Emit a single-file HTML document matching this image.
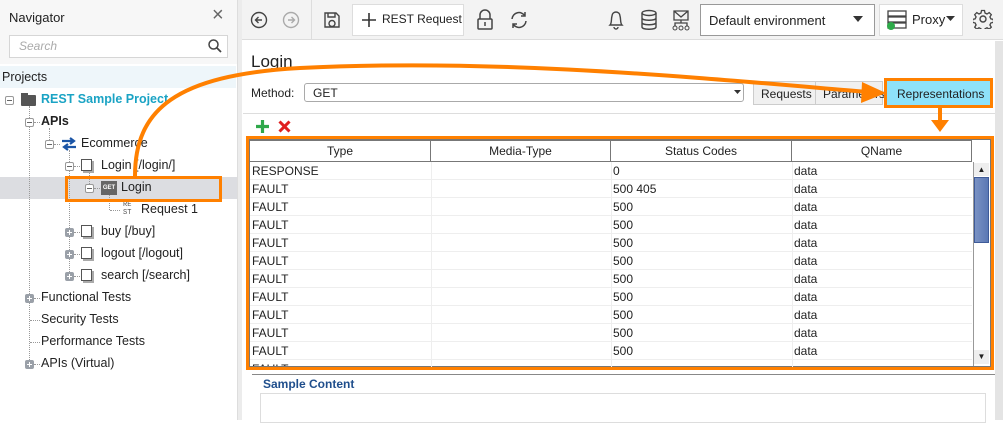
<!DOCTYPE html>
<html><head><meta charset="utf-8"><style>
*{margin:0;padding:0;box-sizing:border-box}
body{width:1003px;height:420px;overflow:hidden;background:#fff;font-family:"Liberation Sans",sans-serif;font-size:13px;color:#222;position:relative}
.a{position:absolute;white-space:nowrap}
.t{font-size:12.5px;color:#222}
.row{position:absolute;left:250px;width:722px;height:18px;border-bottom:1px solid #eee;font-size:12px;line-height:18px}
.row span{position:absolute;top:0}
.ex{position:absolute;width:9px;height:9px;border:1px solid #999;border-radius:2px;background:#fff}
.ex:after{content:"";position:absolute;left:1px;top:3px;width:5px;height:1px;background:#666}
.pl{background:#9aa0a8;border-color:#9aa0a8}
.pl:after{background:#fff}
.pl:before{content:"";position:absolute;left:3px;top:1px;width:1px;height:5px;background:#fff}
.doc{position:absolute;width:11px;height:12px;border:1.5px solid #555;background:#fff;box-shadow:2px 2px 0 #aaa}
.dot{position:absolute;border-left:1px dotted #999}
.doth{position:absolute;border-top:1px dotted #999;height:0}
</style></head><body>
<div class="a" style="left:0;top:0;width:238px;height:420px;background:#fff"></div>
<div class="a" style="left:0;top:0;width:238px;height:64px;background:#f7f7f7"></div>
<div class="a" style="left:9px;top:10px;font-size:13px">Navigator</div>
<div class="a" style="left:212px;top:4px;font-size:20px;color:#666">×</div>
<div class="a" style="left:9px;top:35px;width:219px;height:23px;border:1px solid #d6d6d6;background:#fff"></div>
<div class="a" style="left:19px;top:39px;font-style:italic;color:#aaa;font-size:12px">Search</div>
<svg class="a" style="left:208px;top:39px" width="14" height="14"><circle cx="5.5" cy="5.5" r="4.5" fill="none" stroke="#444" stroke-width="1.5"/><path d="M9 9L13 13" stroke="#444" stroke-width="1.8"/></svg>
<div class="a" style="left:0;top:66px;width:236px;height:22px;background:#eef6fa"></div>
<div class="a t" style="left:2px;top:70px">Projects</div>
<div class="a" style="left:0;top:177px;width:237px;height:22px;background:#dcdde1"></div>
<div class="dot" style="left:29px;top:106px;height:260px"></div>
<div class="dot" style="left:49px;top:128px;height:20px"></div>
<div class="dot" style="left:69px;top:150px;height:128px"></div>
<div class="dot" style="left:89px;top:172px;height:20px"></div>
<div class="dot" style="left:109px;top:194px;height:16px"></div>
<div class="ex" style="left:5px;top:96px"></div>
<div class="a" style="left:21px;top:95px;width:15px;height:11px;background:#555;border-radius:1px"></div>
<div class="a" style="left:21px;top:93px;width:7px;height:4px;background:#555"></div>
<div class="a" style="left:41px;top:92px;font-size:12.5px;font-weight:bold;color:#1aa3c4">REST Sample Project</div>
<div class="ex" style="left:25px;top:118px"></div><div class="doth" style="left:34px;top:122px;width:6px"></div>
<div class="a" style="left:41px;top:114px;font-weight:bold;font-size:12.5px">APIs</div>
<div class="ex" style="left:45px;top:140px"></div><div class="doth" style="left:54px;top:144px;width:6px"></div>
<svg class="a" style="left:61px;top:137px" width="16" height="14"><path d="M1 4H13M9 1L13 4L9 7M15 10H3M7 7L3 10L7 13" stroke="#1b55a6" stroke-width="2.2" fill="none"/></svg>
<div class="a t" style="left:81px;top:136px">Ecommerce</div>
<div class="ex" style="left:65px;top:162px"></div><div class="doth" style="left:74px;top:166px;width:6px"></div>
<div class="doc" style="left:81px;top:159px"></div>
<div class="a t" style="left:101px;top:158px">Login [/login/]</div>
<div class="ex" style="left:85px;top:184px"></div><div class="doth" style="left:94px;top:188px;width:6px"></div>
<div class="a" style="left:101px;top:181px;width:16px;height:14px;background:#666;color:#fff;font-size:6px;font-weight:bold;line-height:14px;text-align:center">GET</div>
<div class="a t" style="left:121px;top:180px">Login</div>
<div class="doth" style="left:110px;top:210px;width:10px"></div>
<div class="a" style="left:123px;top:201px;font-size:7px;line-height:8px;color:#555;font-family:'Liberation Mono',monospace">RE<br>ST</div>
<div class="a t" style="left:141px;top:202px">Request 1</div>
<div class="ex pl" style="left:65px;top:228px"></div><div class="doth" style="left:74px;top:232px;width:6px"></div><div class="doc" style="left:81px;top:225px"></div>
<div class="a t" style="left:101px;top:224px">buy [/buy]</div>
<div class="ex pl" style="left:65px;top:250px"></div><div class="doth" style="left:74px;top:254px;width:6px"></div><div class="doc" style="left:81px;top:247px"></div>
<div class="a t" style="left:101px;top:246px">logout [/logout]</div>
<div class="ex pl" style="left:65px;top:272px"></div><div class="doth" style="left:74px;top:276px;width:6px"></div><div class="doc" style="left:81px;top:269px"></div>
<div class="a t" style="left:101px;top:268px">search [/search]</div>
<div class="ex pl" style="left:25px;top:294px"></div><div class="doth" style="left:34px;top:298px;width:6px"></div>
<div class="a t" style="left:41px;top:290px">Functional Tests</div>
<div class="doth" style="left:30px;top:320px;width:10px"></div>
<div class="a t" style="left:41px;top:312px">Security Tests</div>
<div class="doth" style="left:30px;top:342px;width:10px"></div>
<div class="a t" style="left:41px;top:334px">Performance Tests</div>
<div class="ex pl" style="left:25px;top:360px"></div><div class="doth" style="left:34px;top:364px;width:6px"></div>
<div class="a t" style="left:41px;top:356px">APIs (Virtual)</div>
<div class="a" style="left:237px;top:0;width:5px;height:420px;background:#ececec;border-left:1px solid #ddd"></div>
<div class="a" style="left:242px;top:0;width:761px;height:40px;background:#f3f3f3;border-bottom:1px solid #ddd"></div>
<div class="a" style="left:311px;top:0;width:1px;height:40px;background:#ddd"></div>
<svg class="a" style="left:250px;top:11px" width="18" height="18"><circle cx="9" cy="9" r="7.5" fill="none" stroke="#444" stroke-width="1.4"/><path d="M12 9H6M8.5 6L5.5 9L8.5 12" fill="none" stroke="#444" stroke-width="1.4"/></svg>
<svg class="a" style="left:282px;top:11px" width="18" height="18"><circle cx="9" cy="9" r="7.5" fill="none" stroke="#aaa" stroke-width="1.4"/><path d="M6 9H12M9.5 6L12.5 9L9.5 12" fill="none" stroke="#aaa" stroke-width="1.4"/></svg>
<svg class="a" style="left:323px;top:11px" width="18" height="18"><path d="M2 2H13L16 5V16H2Z M5 2V6H12V2 M6 12.5a3 3 0 1 0 6 0a3 3 0 1 0 -6 0" fill="none" stroke="#444" stroke-width="1.4"/></svg>
<div class="a" style="left:352px;top:4px;width:112px;height:32px;border:1px solid #ddd;background:#fff"></div>
<svg class="a" style="left:361px;top:12px" width="16" height="16"><path d="M8 1V15M1 8H15" stroke="#333" stroke-width="1.6"/></svg>
<div class="a" style="left:382px;top:12px;font-size:12px">REST Request</div>
<svg class="a" style="left:476px;top:9px" width="18" height="22"><path d="M4 10V6a5 5 0 0 1 10 0V10" fill="none" stroke="#444" stroke-width="1.5"/><rect x="2" y="10" width="14" height="10" rx="1" fill="none" stroke="#444" stroke-width="1.5"/><path d="M9 13V17" stroke="#444" stroke-width="1.5"/></svg>
<svg class="a" style="left:509px;top:10px" width="20" height="20"><path d="M3 9a7 7 0 0 1 13-3M17 11a7 7 0 0 1-13 3M16 2V6H12M4 18V14H8" fill="none" stroke="#444" stroke-width="1.5"/></svg>
<svg class="a" style="left:607px;top:9px" width="18" height="22"><path d="M3 16C5 14 4 10 5 7a4 4 0 0 1 8 0c1 3 0 7 2 9Z M7 18a2 2 0 0 0 4 0" fill="none" stroke="#444" stroke-width="1.4"/></svg>
<svg class="a" style="left:640px;top:9px" width="18" height="22"><ellipse cx="9" cy="4" rx="7" ry="2.5" fill="none" stroke="#444" stroke-width="1.4"/><path d="M2 4V18c0 3 14 3 14 0V4M2 9c0 3 14 3 14 0M2 13.5c0 3 14 3 14 0" fill="none" stroke="#444" stroke-width="1.4"/></svg>
<svg class="a" style="left:670px;top:9px" width="22" height="22"><path d="M4 2H18V11H4Z M4 2L11 8L18 2 M11 11V14 M5 17V14H17V17" fill="none" stroke="#444" stroke-width="1.3"/><circle cx="5" cy="19" r="2" fill="none" stroke="#444"/><circle cx="11" cy="19" r="2" fill="none" stroke="#444"/><circle cx="17" cy="19" r="2" fill="none" stroke="#444"/></svg>
<div class="a" style="left:700px;top:4px;width:175px;height:32px;border:1px solid #999;background:#fff"></div>
<div class="a" style="left:709px;top:13px;font-size:13px">Default environment</div>
<svg class="a" style="left:853px;top:16px" width="10" height="6"><path d="M0 0H10L5 6Z" fill="#333"/></svg>
<div class="a" style="left:879px;top:4px;width:84px;height:32px;border:1px solid #ddd;background:#fff"></div>
<svg class="a" style="left:885px;top:9px" width="24" height="22"><rect x="3" y="2" width="18" height="5" fill="none" stroke="#444" stroke-width="1.3"/><rect x="3" y="8" width="18" height="5" fill="none" stroke="#444" stroke-width="1.3"/><rect x="3" y="14" width="18" height="5" fill="none" stroke="#444" stroke-width="1.3"/><circle cx="6" cy="17" r="4" fill="#2eaa4a"/></svg>
<div class="a" style="left:912px;top:12px;font-size:13px">Proxy</div>
<svg class="a" style="left:946px;top:16px" width="9" height="6"><path d="M0 0H9L4.5 5Z" fill="#333"/></svg>
<svg class="a" style="left:973px;top:9px" width="20" height="20"><circle cx="10" cy="10" r="3" fill="none" stroke="#444" stroke-width="1.4"/><path d="M8.5 1.5h3l.5 2.5 2 1 2.2-1.4 2.1 2.1-1.4 2.2 1 2 2.5.5v3l-2.5.5-1 2 1.4 2.2-2.1 2.1-2.2-1.4-2 1-.5 2.5h-3l-.5-2.5-2-1-2.2 1.4-2.1-2.1 1.4-2.2-1-2-2.5-.5v-3l2.5-.5 1-2-1.4-2.2 2.1-2.1 2.2 1.4 2-1Z" fill="none" stroke="#444" stroke-width="1.3"/></svg>
<div class="a" style="left:995px;top:41px;width:8px;height:379px;background:#e4e4e4"></div>
<div class="a" style="left:251px;top:52px;font-size:17px">Login</div>
<div class="a" style="left:251px;top:86px;font-size:12px">Method:</div>
<div class="a" style="left:304px;top:83px;width:440px;height:19px;border:1px solid #aaa;border-radius:3px;background:#fff"></div>
<div class="a" style="left:313px;top:86px;font-size:12px">GET</div>
<svg class="a" style="left:734px;top:90px" width="7" height="4"><path d="M0 0H7L3.5 4Z" fill="#333"/></svg>
<div class="a" style="left:753px;top:81px;width:63px;height:24px;border:1px solid #ccc;background:#f0f0f0"></div>
<div class="a" style="left:761px;top:87px;font-size:12px">Requests</div>
<div class="a" style="left:815px;top:81px;width:68px;height:24px;border:1px solid #ccc;background:#f0f0f0"></div>
<div class="a" style="left:823px;top:87px;font-size:12px">Parameters</div>
<div class="a" style="left:884px;top:78px;width:109px;height:30px;border:3px solid #ff8000;background:#8ee2fa"></div>
<div class="a" style="left:897px;top:87px;font-size:12px">Representations</div>
<div class="a" style="left:243px;top:113px;width:752px;height:1px;background:#ddd"></div>
<svg class="a" style="left:255px;top:119px" width="15" height="15"><path d="M7.5 1V14M1 7.5H14" stroke="#2ea84a" stroke-width="3.2"/></svg>
<svg class="a" style="left:278px;top:120px" width="13" height="13"><path d="M1.5 1.5L11.5 11.5M11.5 1.5L1.5 11.5" stroke="#e02020" stroke-width="3"/></svg>
<div class="a" style="left:246px;top:136px;width:748px;height:234px;border:3px solid #ff8000"></div>
<div class="a" style="left:249px;top:139px;width:742px;height:228px;border:1px solid #777;background:#fff;overflow:hidden"></div>
<div class="a" style="left:250px;top:141px;width:722px;height:21px;border-bottom:1px solid #777;font-size:12px;line-height:20px">
<span class="a" style="left:0;width:181px;text-align:center;border-right:1px solid #777;height:20px">Type</span>
<span class="a" style="left:181px;width:180px;text-align:center;border-right:1px solid #777;height:20px">Media-Type</span>
<span class="a" style="left:361px;width:181px;text-align:center;border-right:1px solid #777;height:20px">Status Codes</span>
<span class="a" style="left:542px;width:180px;text-align:center;border-right:1px solid #777;height:20px">QName</span>
</div>
<div class="a" style="left:250px;top:140px;width:722px;height:1px;background:#777"></div>
<div class="a" style="left:431px;top:162px;width:1px;height:205px;background:#eee"></div>
<div class="a" style="left:611px;top:162px;width:1px;height:205px;background:#eee"></div>
<div class="a" style="left:792px;top:162px;width:1px;height:205px;background:#eee"></div>
<div class="row" style="top:162px"><span style="left:2px">RESPONSE</span><span style="left:363px">0</span><span style="left:544px">data</span></div>
<div class="row" style="top:180px"><span style="left:2px">FAULT</span><span style="left:363px">500 405</span><span style="left:544px">data</span></div>
<div class="row" style="top:198px"><span style="left:2px">FAULT</span><span style="left:363px">500</span><span style="left:544px">data</span></div>
<div class="row" style="top:216px"><span style="left:2px">FAULT</span><span style="left:363px">500</span><span style="left:544px">data</span></div>
<div class="row" style="top:234px"><span style="left:2px">FAULT</span><span style="left:363px">500</span><span style="left:544px">data</span></div>
<div class="row" style="top:252px"><span style="left:2px">FAULT</span><span style="left:363px">500</span><span style="left:544px">data</span></div>
<div class="row" style="top:270px"><span style="left:2px">FAULT</span><span style="left:363px">500</span><span style="left:544px">data</span></div>
<div class="row" style="top:288px"><span style="left:2px">FAULT</span><span style="left:363px">500</span><span style="left:544px">data</span></div>
<div class="row" style="top:306px"><span style="left:2px">FAULT</span><span style="left:363px">500</span><span style="left:544px">data</span></div>
<div class="row" style="top:324px"><span style="left:2px">FAULT</span><span style="left:363px">500</span><span style="left:544px">data</span></div>
<div class="row" style="top:342px"><span style="left:2px">FAULT</span><span style="left:363px">500</span><span style="left:544px">data</span></div>
<div class="a" style="left:250px;top:360px;width:722px;height:6px;overflow:hidden;font-size:12px;line-height:18px"><span style="position:absolute;left:2px">FAULT</span></div>
<div class="a" style="left:973px;top:162px;width:16px;height:204px;background:#fff;border-left:1px solid #999"></div>
<div class="a" style="left:974px;top:163px;width:15px;height:13px;background:#eee;font-size:8px;text-align:center;line-height:13px">▲</div>
<div class="a" style="left:974px;top:177px;width:15px;height:66px;background:linear-gradient(90deg,#7a92c4,#5b78b4);border:1px solid #3f5b99"></div>
<div class="a" style="left:974px;top:350px;width:15px;height:14px;background:#eee;font-size:8px;text-align:center;line-height:14px">▼</div>
<div class="a" style="left:252px;top:374px;width:743px;height:1px;background:#888"></div>
<div class="a" style="left:263px;top:377px;font-size:12px;font-weight:bold;color:#1f4e8c">Sample Content</div>
<div class="a" style="left:260px;top:393px;width:726px;height:30px;border:1px solid #ddd"></div>
<div class="a" style="left:65px;top:176px;width:157px;height:26px;border:3px solid #ff8000"></div>
<svg class="a" style="left:0;top:0" width="1003" height="420">
<path d="M135 176C135 110 175 75 300 68C500 58 700 78 868 92" fill="none" stroke="#ff8000" stroke-width="4"/>
<path d="M862 82L886 93L861 103Z" fill="#ff8000"/>
<path d="M940 108V124" stroke="#ff8000" stroke-width="4"/>
<path d="M931 120L940 132L949 120Z" fill="#ff8000"/>
</svg>
</body></html>
